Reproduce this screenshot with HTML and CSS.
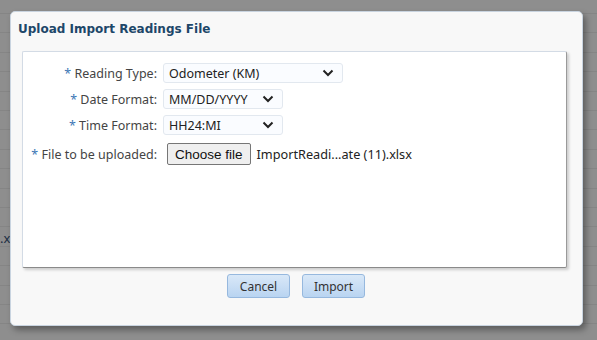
FILE: index.html
```html
<!DOCTYPE html>
<html lang="en">
<head>
    <meta charset="UTF-8">
    <title>Upload Import Readings File</title>
    <link rel="stylesheet" href="styles.css">
</head>
<body>
    <div class="backdrop">
        <span class="behind">.x</span>

        <div class="dialog">
            <h1 class="dialog-title">Upload Import Readings File</h1>

            <div class="panel">
                <div class="form-grid">
                    <label class="field-label"><span class="req">*</span> Reading Type:</label>
                    <div class="select wide">
                        <span>Odometer (KM)</span>
                        <svg width="12" height="8" viewBox="0 0 12 8"><path d="M1.5 1.5 L6 6 L10.5 1.5" fill="none" stroke="#222" stroke-width="2"/></svg>
                    </div>

                    <label class="field-label"><span class="req">*</span> Date Format:</label>
                    <div class="select">
                        <span>MM/DD/YYYY</span>
                        <svg width="12" height="8" viewBox="0 0 12 8"><path d="M1.5 1.5 L6 6 L10.5 1.5" fill="none" stroke="#222" stroke-width="2"/></svg>
                    </div>

                    <label class="field-label"><span class="req">*</span> Time Format:</label>
                    <div class="select">
                        <span>HH24:MI</span>
                        <svg width="12" height="8" viewBox="0 0 12 8"><path d="M1.5 1.5 L6 6 L10.5 1.5" fill="none" stroke="#222" stroke-width="2"/></svg>
                    </div>

                    <label class="field-label file-label"><span class="req">*</span> File to be uploaded:</label>
                    <div class="file-row">
                        <button class="choose" type="button">Choose file</button>
                        <span class="file-name">ImportReadi...ate (11).xlsx</span>
                    </div>
                </div>
            </div>

            <div class="actions">
                <button class="btn" type="button">Cancel</button>
                <button class="btn" type="button">Import</button>
            </div>
        </div>
    </div>
</body>
</html>
```

FILE: styles.css
```css
body {
    margin: 0;
    font-family: "Noto Sans", "Open Sans", sans-serif;
}

.backdrop {
    position: relative;
    height: 340px;
    padding: 11px 14px 0 10px;
    box-sizing: border-box;
    background-color: #8e8e8e;
    background-image: repeating-linear-gradient(to bottom, transparent 0, transparent 13px, #858585 13px, #858585 14px, transparent 14px, transparent 19.4px);
}

/* texte de la page en dessous du dialogue */
.behind {
    position: absolute;
    left: 0;
    top: 229px;
    font-size: 13px;
    color: #1c2f45;
}

.dialog {
    position: relative;
    height: 315px;
    box-sizing: border-box;
    background-color: #f8f8f8;
    border: 1px solid #c9d4e0;
    border-radius: 5px;
    box-shadow: 3px 4px 6px rgba(0, 0, 0, 0.35);
    padding: 0 15px 0 7px;
}

.dialog-title {
    margin: 0;
    padding: 10px 0 0 0;
    height: 29px;
    font-family: "DejaVu Sans", Verdana, sans-serif;
    font-size: 12px;
    font-weight: bold;
    color: #1d4769;
}

.panel {
    height: 217px;
    margin-left: 4px;
    box-sizing: border-box;
    background-color: #fff;
    border: 1px solid #d3dbe5;
    border-right-color: #9a9a9a;
    border-bottom-color: #8a8a8a;
    border-radius: 2px;
    box-shadow: 2px 2px 3px rgba(0, 0, 0, 0.18);
    padding-top: 11px;
}

.form-grid {
    display: grid;
    grid-template-columns: 134px auto;
    column-gap: 6px;
    row-gap: 6px;
    align-items: center;
    justify-items: start;
}

.field-label {
    justify-self: end;
    white-space: nowrap;
    font-size: 12.5px;
    color: #444;
}

.req {
    color: #3b77b5;
}

.select {
    display: flex;
    align-items: center;
    justify-content: space-between;
    width: 120px;
    height: 20px;
    box-sizing: border-box;
    padding: 0 8px 0 5px;
    border: 1px solid #e2e8ef;
    border-radius: 3px;
    background-color: #fafcff;
    font-size: 12.5px;
    color: #222;
}

.select.wide {
    width: 180px;
}

.file-label {
    margin-top: 2px;
}

.file-row {
    display: flex;
    align-items: center;
    margin-top: 2px;
}

.choose {
    margin: 0 6px 0 4px;
    height: 22px;
    padding: 0 7px;
    font-family: "Liberation Sans", Arial, sans-serif;
    font-size: 13.5px;
    color: #111;
    background-color: #efefef;
    border: 1px solid #767676;
    border-radius: 2px;
}

.file-name {
    font-size: 12.7px;
    color: #222;
}

.actions {
    display: flex;
    justify-content: center;
    gap: 12px;
    padding-top: 6px;
    padding-left: 7px;
}

.btn {
    height: 24px;
    min-width: 63px;
    padding: 0 10px;
    font-family: "Noto Sans", sans-serif;
    font-size: 12px;
    color: #333;
    background: linear-gradient(to bottom, #d9e8f8, #b9d4f1);
    border: 1px solid #96b8de;
    border-radius: 3px;
}
```
